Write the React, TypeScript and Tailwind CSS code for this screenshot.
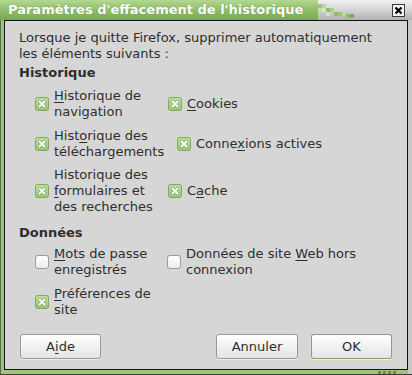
import type { ReactNode } from 'react'

const Checked = () => (
  <svg width="14" height="14" viewBox="0 0 14 14" className="shrink-0">
    <defs>
      <linearGradient id="cg" x1="0" y1="0" x2="0" y2="1">
        <stop offset="0" stopColor="#bde39a" />
        <stop offset="1" stopColor="#98c76f" />
      </linearGradient>
    </defs>
    <rect x="0.5" y="0.5" width="13" height="13" rx="2" fill="url(#cg)" stroke="#7fa962" />
    <path d="M4.5 4.5 L9.5 9.5 M9.5 4.5 L4.5 9.5" stroke="#8aa77a" strokeWidth="3.2" strokeLinecap="square" />
    <path d="M4.5 4.5 L9.5 9.5 M9.5 4.5 L4.5 9.5" stroke="#ffffff" strokeWidth="1.8" strokeLinecap="square" />
  </svg>
)

const Unchecked = () => (
  <div className="w-[14px] h-[14px] shrink-0 rounded-[3px] border border-[#9c9c9c] bg-gradient-to-b from-[#ffffff] to-[#ececec]" />
)

const Item = ({ checked, children, className = '' }: { checked: boolean; children: ReactNode; className?: string }) => (
  <div className={`flex items-center gap-[5px] ${className}`}>
    {checked ? <Checked /> : <Unchecked />}
    <span className="leading-[16px]">{children}</span>
  </div>
)

const U = ({ children }: { children: ReactNode }) => (
  <span className="underline underline-offset-[2px] decoration-1">{children}</span>
)

const TitleFade = () => {
  const blocks: [number, number, string][] = [
    [318, 4, '#9cc57a'], [322, 4, '#b9d8a0'], [326, 8, '#8fbb6a'], [330, 8, '#a9cf8c'],
    [334, 12, '#8fbb6a'], [338, 12, '#9cc57a'], [342, 12, '#b9d8a0'], [326, 12, '#cfe3c0'],
    [346, 14, '#8fbb6a'], [350, 14, '#7fae5a'], [322, 8, '#d6e6c8'], [318, 8, '#c4dcb0'],
  ]
  return (
    <svg width="40" height="20" viewBox="318 0 40 20" className="shrink-0">
      {blocks.map(([x, y, c], i) => (
        <rect key={i} x={x} y={y} width="4" height="4" fill={c} />
      ))}
    </svg>
  )
}

const Btn = ({ children, ok = false, className = '' }: { children: ReactNode; ok?: boolean; className?: string }) => (
  <div
    className={`h-[25px] flex items-center justify-center rounded-[3px] border bg-gradient-to-b from-[#ffffff] to-[#e4e4e4] text-[13px] text-[#2e2e2e] shadow-[0_1px_0_#eeeeee] ${
      ok ? 'border-[#8e9d86] border-b-[#7fa866]' : 'border-[#9a9a9a]'
    } ${className}`}
  >
    {children}
  </div>
)

export default function App() {
  return (
    <div className="w-[412px] h-[375px] flex flex-col bg-[#c4c4c4] font-['DejaVu_Sans',sans-serif] overflow-hidden">
      {/* title bar */}
      <div className="h-[20px] flex shrink-0">
        <div className="w-[318px] h-full bg-gradient-to-b from-[#b3d893] via-[#8fbd69] to-[#79a951] flex items-center pl-[8px]">
          <span className="text-white font-bold text-[13px] leading-[20px] whitespace-nowrap [text-shadow:0_0_1px_#5f8a40]">
            Paramètres d'effacement de l'historique
          </span>
        </div>
        <div className="flex-1 h-full bg-gradient-to-b from-[#f2f2f2] via-[#d4d4d4] to-[#b0b0b0] flex items-start">
          <TitleFade />
          <div className="flex-1" />
          <div className="mt-[4px] mr-[7px] w-[13px] h-[13px] border border-[#3a3a3a] bg-[#f4f4f4] flex items-center justify-center">
            <svg width="9" height="9" viewBox="0 0 9 9">
              <path d="M1.5 1.5 L7.5 7.5 M7.5 1.5 L1.5 7.5" stroke="#000" strokeWidth="2.2" />
            </svg>
          </div>
        </div>
      </div>
      {/* body */}
      <div className="flex-1 flex">
        <div className="w-[1px] bg-[#5a6e4c]" />
        <div className="w-[3px] bg-[#9cc57a]" />
        <div className="flex-1 border-t border-l border-r border-b border-[#111111] bg-[#d6d6d6] flex flex-col pl-[14px] pr-[15px] pt-[9px] pb-[10px] text-[13px] text-[#2e2e2e]">
          <div className="leading-[16px]">
            Lorsque je quitte Firefox, supprimer automatiquement
            <br />
            les éléments suivants :
          </div>
          <div className="mt-[3px] font-bold leading-[16px]">Historique</div>
          <div className="mt-[7px] ml-[16px] flex flex-col">
            <div className="flex items-center">
              <Item checked className="w-[133px]">
                <U>H</U>istorique de
                <br />
                navigation
              </Item>
              <Item checked>
                <U>C</U>ookies
              </Item>
            </div>
            <div className="flex items-center mt-[8px]">
              <Item checked className="w-[142px]">
                Hist<U>o</U>rique des
                <br />
                téléchargements
              </Item>
              <Item checked>
                Conne<U>x</U>ions actives
              </Item>
            </div>
            <div className="flex items-center mt-[7px]">
              <Item checked className="w-[133px]">
                Historique des
                <br />
                <U>f</U>ormulaires et
                <br />
                des recherches
              </Item>
              <Item checked>
                C<U>a</U>che
              </Item>
            </div>
          </div>
          <div className="mt-[10px] font-bold leading-[16px]">Données</div>
          <div className="mt-[5px] ml-[16px] flex flex-col">
            <div className="flex items-center">
              <Item checked={false} className="w-[132px]">
                <U>M</U>ots de passe
                <br />
                enregistrés
              </Item>
              <Item checked={false}>
                Données de site <U>W</U>eb hors
                <br />
                connexion
              </Item>
            </div>
            <div className="flex items-center mt-[8px]">
              <Item checked>
                <U>P</U>références de
                <br />
                site
              </Item>
            </div>
          </div>
          <div className="mt-auto flex items-center">
            <Btn className="ml-[1px] w-[81px]">
              A<U>i</U>de
            </Btn>
            <div className="flex-1" />
            <Btn className="w-[82px]">Annuler</Btn>
            <Btn ok className="ml-[13px] w-[81px]">
              OK
            </Btn>
          </div>
        </div>
        <div className="w-[4px] bg-[#c8c8c8]" />
      </div>
      {/* bottom border */}
      <div className="h-[4px] shrink-0 flex">
        <div className="w-[1px] bg-[#5a6e4c]" />
        <div className="flex-1 bg-[#9cc57a] flex items-center justify-end pr-[12px] gap-[2px]">
          <div className="w-[3px] h-[3px] bg-[#6b8b55]" />
          <div className="w-[3px] h-[3px] bg-[#6b8b55]" />
          <div className="w-[3px] h-[3px] bg-[#6b8b55]" />
          <div className="w-[3px] h-[3px] bg-[#6b8b55]" />
        </div>
        <div className="w-[4px] bg-[#c8c8c8]" />
      </div>
      <div className="h-[1px] shrink-0 bg-[#3a3a3a]" />
    </div>
  )
}
